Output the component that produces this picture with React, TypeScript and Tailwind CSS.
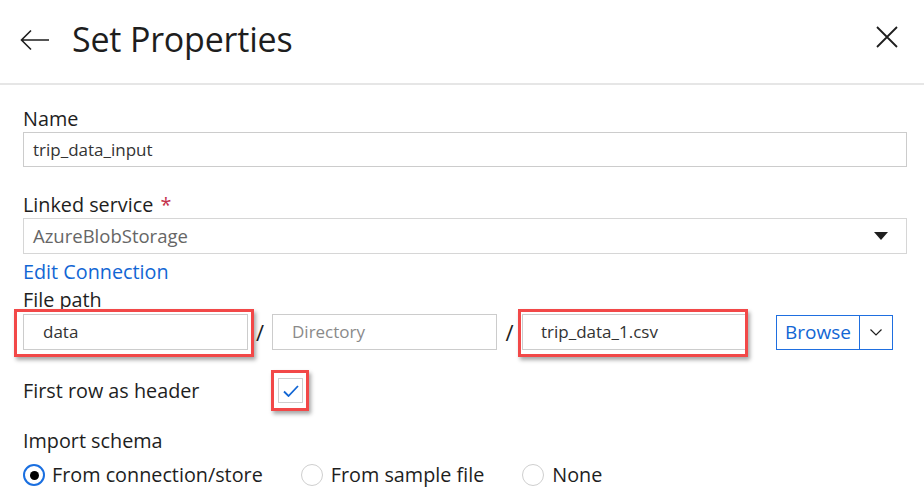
import React from "react";

const font = { fontFamily: '"Segoe UI", "Open Sans", sans-serif' };

function Highlight({ l, t, r, b }: { l: number; t: number; r: number; b: number }) {
  return (
    <div
      className="pointer-events-none absolute border-[3px] border-[#f24848] shadow-[2px_3px_4px_rgba(0,0,0,0.35)]"
      style={{ left: -l, top: -t, right: -r, bottom: -b }}
    />
  );
}

export default function App() {
  return (
    <div className="h-[498px] w-[924px] overflow-hidden bg-white text-[#1e1e1e]" style={font}>
      {/* Header */}
      <div className="flex h-[85px] items-center border-b-2 border-[#e6e6e6] pl-[20px] pr-[26px]">
        <svg width="30" height="22" viewBox="0 0 30 22" className="mb-[4px]" fill="none" stroke="#1e1e1e" strokeWidth="1.6">
          <path d="M29 11H2M11 1.5 1.5 11l9.5 9.5" />
        </svg>
        <div className="ml-[22px] pb-[6px] text-[34px] leading-none tracking-[-0.2px]">Set Properties</div>
        <div className="flex-1" />
        <svg width="22" height="22" viewBox="0 0 22 22" className="mb-[10px]" stroke="#1e1e1e" strokeWidth="1.8">
          <path d="M1 1l20 20M21 1 1 21" />
        </svg>
      </div>

      <div className="pl-[23px] pr-[17px] text-[19.8px] leading-[24px]">
        <div className="mt-[22px]">Name</div>
        <div className="mt-[1px] flex h-[35px] items-center border border-[#cccccc] px-[9px] text-[17px] text-[#333]">
          trip_data_input
        </div>

        <div className="mt-[26px]">
          Linked service <span className="ml-[2px] text-[#c4314b]">*</span>
        </div>
        <div className="mt-[1px] flex h-[36px] items-center border border-[#d6d6d6] pl-[9px] pr-[18px] text-[18.5px] text-[#666]">
          <span className="flex-1">AzureBlobStorage</span>
          <svg width="14" height="8" viewBox="0 0 14 8">
            <path d="M0 0h14L7 8z" fill="#1e1e1e" />
          </svg>
        </div>

        <div className="mt-[6px] text-[#1266d4]">Edit Connection</div>
        <div className="mt-[4px]">File path</div>

        <div className="mt-[2px] flex items-center">
          <div className="relative h-[36px] w-[225px]">
            <div className="flex h-full items-center border border-[#cccccc] pl-[19px] text-[17px] text-[#333]">data</div>
            <Highlight l={9} t={5} r={6} b={7} />
          </div>
          <div className="w-[24px] text-center text-[22px]">/</div>
          <div className="flex h-[36px] w-[225px] items-center border border-[#cccccc] pl-[19px] text-[17px] text-[#8a8a8a]">
            Directory
          </div>
          <div className="w-[25px] text-center text-[22px]">/</div>
          <div className="relative h-[36px] w-[224px]">
            <div className="flex h-full items-center border border-[#cccccc] pl-[18px] text-[17px] text-[#333]">trip_data_1.csv</div>
            <Highlight l={4} t={5} r={2} b={7} />
          </div>
          <div className="ml-[30px] flex h-[35px] border border-[#1f6fe0]">
            <div className="flex w-[82px] items-center justify-center text-[19px] text-[#1266d4]">Browse</div>
            <div className="flex w-[33px] items-center justify-center border-l border-[#1f6fe0]">
              <svg width="12" height="7" viewBox="0 0 12 7" fill="none" stroke="#1e1e1e" strokeWidth="1.2">
                <path d="M0.5 0.5 6 6l5.5-5.5" />
              </svg>
            </div>
          </div>
        </div>

        <div className="mt-[28px] flex h-[25px] items-center">
          <div className="w-[255px]">First row as header</div>
          <div className="relative h-[25px] w-[25px]">
            <div className="flex h-full w-full items-center justify-center border border-[#cfcfcf]">
              <svg width="16" height="12" viewBox="0 0 16 12" fill="none" stroke="#1266d4" strokeWidth="1.8">
                <path d="M1 6.5 5.5 11 15 1" />
              </svg>
            </div>
            <Highlight l={7} t={8} r={6} b={8} />
          </div>
        </div>

        <div className="mt-[26px]">Import schema</div>
        <div className="mt-[10px] flex items-center">
          <div className="flex items-center">
            <div className="flex h-[22px] w-[22px] items-center justify-center rounded-full border-2 border-[#1a6fe0]">
              <div className="h-[9px] w-[9px] rounded-full bg-black" />
            </div>
            <span className="ml-[7px]">From connection/store</span>
          </div>
          <div className="ml-[38px] flex items-center">
            <div className="h-[22px] w-[22px] rounded-full border border-[#cfcfcf]" />
            <span className="ml-[8px]">From sample file</span>
          </div>
          <div className="ml-[38px] flex items-center">
            <div className="h-[22px] w-[22px] rounded-full border border-[#cfcfcf]" />
            <span className="ml-[8px]">None</span>
          </div>
        </div>
      </div>
    </div>
  );
}
